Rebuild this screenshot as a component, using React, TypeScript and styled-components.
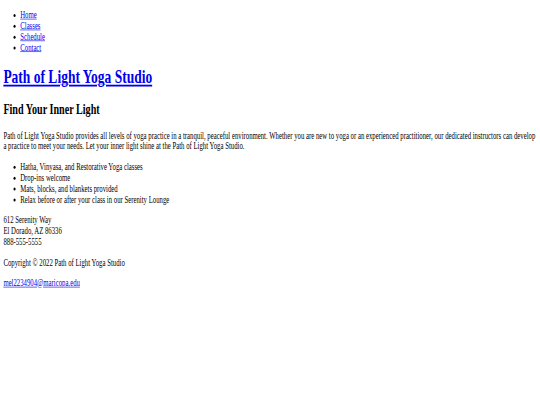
import React from "react";
import styled, { createGlobalStyle } from "styled-components";

// the reference is an unstyled page shot at 1280px wide, then squeezed into 540x405
const SCALE_X = 540 / 1280;
const SCALE_Y = 0.605;

const GlobalStyle = createGlobalStyle`
  html, body {
    margin: 0;
    overflow: hidden;
    background: #ffffff;
  }
`;

const Viewport = styled.div`
  display: flow-root;
  width: 1280px;
  height: ${405 / SCALE_Y}px;
  overflow: hidden;
  transform: scale(${SCALE_X}, ${SCALE_Y});
  transform-origin: 0 0;
`;

const Page = styled.div`
  margin: 8px;
  font-family: "Liberation Serif", "Times New Roman", serif;
  font-size: 16px;
  color: #000000;
`;

const NavList = styled.ul`
  margin: 16px 0;
  padding-left: 40px;
  list-style: disc;
`;

const Link = styled.a`
  color: #0000ee;
  text-decoration: underline;
`;

const SiteTitle = styled.h1`
  margin: 21.44px 0;
  font-size: 32px;
  font-weight: bold;
`;

const Heading = styled.h2`
  margin: 19.92px 0;
  font-size: 24px;
  font-weight: bold;
`;

const Text = styled.p`
  margin: 16px 0;
`;

const FeatureList = styled.ul`
  margin: 16px 0;
  padding-left: 40px;
  list-style: disc;
`;

const navItems = ["Home", "Classes", "Schedule", "Contact"];

const features = [
  "Hatha, Vinyasa, and Restorative Yoga classes",
  "Drop-ins welcome",
  "Mats, blocks, and blankets provided",
  "Relax before or after your class in our Serenity Lounge",
];

export default function App() {
  return (
    <>
      <GlobalStyle />
      <Viewport>
        <Page>
          <header>
            <nav>
              <NavList>
                {navItems.map((item) => (
                  <li key={item}>
                    <Link href="#">{item}</Link>
                  </li>
                ))}
              </NavList>
            </nav>
            <SiteTitle>
              <Link href="#">Path of Light Yoga Studio</Link>
            </SiteTitle>
          </header>
          <main>
            <Heading>Find Your Inner Light</Heading>
            <Text>
              Path of Light Yoga Studio provides all levels of yoga practice in a tranquil, peaceful
              environment. Whether you are new to yoga or an experienced practitioner, our dedicated
              instructors can develop a practice to meet your needs. Let your inner light shine at
              the Path of Light Yoga Studio.
            </Text>
            <FeatureList>
              {features.map((f) => (
                <li key={f}>{f}</li>
              ))}
            </FeatureList>
            <Text>
              612 Serenity Way
              <br />
              El Dorado, AZ 86336
              <br />
              888-555-5555
            </Text>
          </main>
          <footer>
            <Text>Copyright © 2022 Path of Light Yoga Studio</Text>
            <Text>
              <Link href="#">mel2234904@maricopa.edu</Link>
            </Text>
          </footer>
        </Page>
      </Viewport>
    </>
  );
}
